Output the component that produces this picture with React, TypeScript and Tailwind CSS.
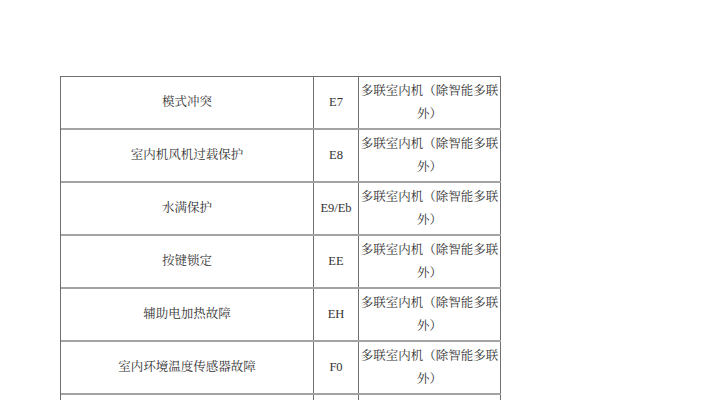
const rows = [
  { name: "模式冲突", code: "E7" },
  { name: "室内机风机过载保护", code: "E8" },
  { name: "水满保护", code: "E9/Eb" },
  { name: "按键锁定", code: "EE" },
  { name: "辅助电加热故障", code: "EH" },
  { name: "室内环境温度传感器故障", code: "F0" },
];

const scope = "多联室内机（除智能多联外）";

export default function App() {
  return (
    <div
      className="h-[400px] overflow-hidden bg-white pl-[60px] pt-[76px] text-[12.5px] text-[#333]"
      style={{ fontFamily: '"Liberation Serif", "Noto Serif CJK SC", "Noto Sans CJK SC", serif' }}
    >
      <div className="w-[441px] border-l border-t border-[#6f6f6f]">
        {rows.map((r) => (
          <div
            key={r.code}
            className="grid h-[53px] grid-cols-[253px_45px_142px] border-b-2 border-[#a3a3a3]"
          >
            <div className="flex items-center justify-center border-r border-[#6f6f6f]">{r.name}</div>
            <div className="flex items-center justify-center border-r border-[#6f6f6f]">{r.code}</div>
            <div className="flex items-center justify-center border-r border-[#6f6f6f] px-[1px] text-center leading-[23px]">
              {scope}
            </div>
          </div>
        ))}
        {/* next row, cut off by the bottom of the page */}
        <div className="grid h-[53px] grid-cols-[253px_45px_142px]">
          <div className="border-r border-[#6f6f6f]" />
          <div className="border-r border-[#6f6f6f]" />
          <div className="border-r border-[#6f6f6f]" />
        </div>
      </div>
    </div>
  );
}
